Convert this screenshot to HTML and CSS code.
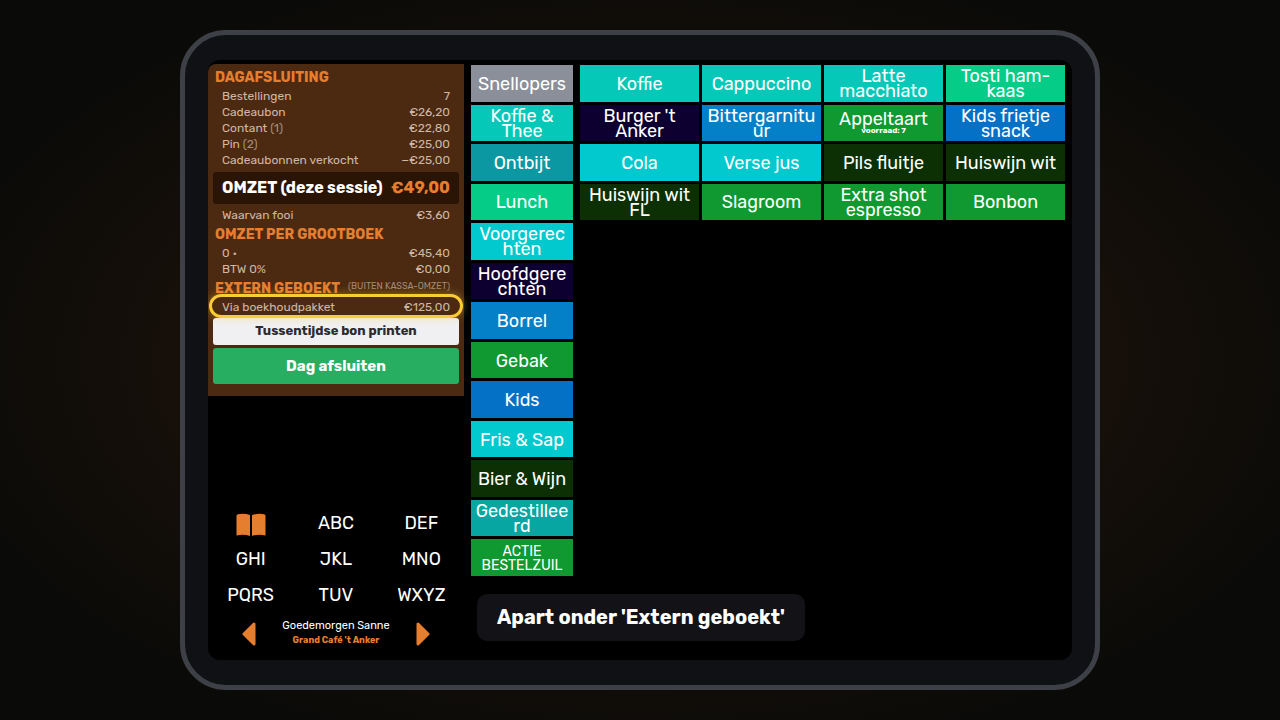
FILE: index.html
```html
<!DOCTYPE html>
<html lang="nl">
<head>
    <meta charset="UTF-8">
    <meta name="viewport" content="width=device-width, initial-scale=1.0">
    <title>Kassa - Dagafsluiting</title>
    <link rel="stylesheet" href="styles.css">
</head>
<body>
    <div class="device">
        <main class="screen">
            <div class="side">
                <section class="report">
                    <h2>Dagafsluiting</h2>
                    <table>
                        <tr><td>Bestellingen</td><td>7</td></tr>
                        <tr><td>Cadeaubon</td><td>€26,20</td></tr>
                        <tr><td>Contant <span class="count">(1)</span></td><td>€22,80</td></tr>
                        <tr><td>Pin <span class="count">(2)</span></td><td>€25,00</td></tr>
                        <tr><td>Cadeaubonnen verkocht</td><td>−€25,00</td></tr>
                    </table>
                    <div class="total">
                        <span>OMZET (deze sessie)</span>
                        <span class="amount">€49,00</span>
                    </div>
                    <table>
                        <tr><td>Waarvan fooi</td><td>€3,60</td></tr>
                    </table>
                    <h2>Omzet per grootboek</h2>
                    <table>
                        <tr><td>0 •</td><td>€45,40</td></tr>
                        <tr><td>BTW 0%</td><td>€0,00</td></tr>
                    </table>
                    <h2>Extern geboekt <small>(buiten kassa-omzet)</small></h2>
                    <div class="highlight">
                        <table>
                            <tr><td>Via boekhoudpakket</td><td>€125,00</td></tr>
                        </table>
                    </div>
                    <button type="button" class="print">Tussentijdse bon printen</button>
                    <button type="button" class="close-day">Dag afsluiten</button>
                </section>

                <section class="keypad">
                    <div class="keys">
                        <button type="button" aria-label="Menukaart">
                            <svg class="book" viewBox="0 0 30 24" width="30" height="24">
                                <path d="M0.500 3Q0.500 1.500 2 1.200Q8 0 14 2V23Q8 21 0.500 22.500Z"/>
                                <path d="M29.500 3Q29.500 1.500 28 1.200Q22 0 16 2V23Q22 21 29.500 22.500Z"/>
                            </svg>
                        </button>
                        <button type="button">ABC</button>
                        <button type="button">DEF</button>
                        <button type="button">GHI</button>
                        <button type="button">JKL</button>
                        <button type="button">MNO</button>
                        <button type="button">PQRS</button>
                        <button type="button">TUV</button>
                        <button type="button">WXYZ</button>
                    </div>
                    <div class="user-bar">
                        <button type="button" aria-label="Vorige">
                            <svg class="arrow" viewBox="0 0 14 24" width="14" height="24">
                                <path d="M12 2V22L2 12Z"/>
                            </svg>
                        </button>
                        <div class="user">
                            <p class="greeting">Goedemorgen Sanne</p>
                            <p class="place">Grand Café 't Anker</p>
                        </div>
                        <button type="button" aria-label="Volgende">
                            <svg class="arrow" viewBox="0 0 14 24" width="14" height="24">
                                <path d="M2 2V22L12 12Z"/>
                            </svg>
                        </button>
                    </div>
                </section>
            </div>

            <nav class="tiles categories">
                <button type="button" class="gray">Snellopers</button>
                <button type="button" class="turquoise">Koffie &amp; Thee</button>
                <button type="button" class="teal">Ontbijt</button>
                <button type="button" class="mint">Lunch</button>
                <button type="button" class="cyan">Voorgerec<br>hten</button>
                <button type="button" class="navy">Hoofdgere<br>chten</button>
                <button type="button" class="azure">Borrel</button>
                <button type="button" class="green">Gebak</button>
                <button type="button" class="blue">Kids</button>
                <button type="button" class="cyan">Fris &amp; Sap</button>
                <button type="button" class="forest">Bier &amp; Wijn</button>
                <button type="button" class="sea">Gedestillee<br>rd</button>
                <button type="button" class="green compact">ACTIE BESTELZUIL</button>
            </nav>

            <section class="tiles products">
                <button type="button" class="turquoise">Koffie</button>
                <button type="button" class="turquoise">Cappuccino</button>
                <button type="button" class="turquoise">Latte macchiato</button>
                <button type="button" class="mint">Tosti ham-kaas</button>
                <button type="button" class="navy">Burger 't Anker</button>
                <button type="button" class="azure">Bittergarnitu<br>ur</button>
                <button type="button" class="green">Appeltaart <span class="stock">voorraad: 7</span></button>
                <button type="button" class="blue">Kids frietje snack</button>
                <button type="button" class="cyan">Cola</button>
                <button type="button" class="cyan">Verse jus</button>
                <button type="button" class="forest">Pils fluitje</button>
                <button type="button" class="forest">Huiswijn wit</button>
                <button type="button" class="forest">Huiswijn wit FL</button>
                <button type="button" class="green">Slagroom</button>
                <button type="button" class="green">Extra shot espresso</button>
                <button type="button" class="green">Bonbon</button>
            </section>

            <div class="toast">Apart onder 'Extern geboekt'</div>
        </main>
    </div>
</body>
</html>
```

FILE: styles.css
```css
* {
    box-sizing: border-box;
}

body {
    margin: 0;
    padding: 30px 180px;
    min-height: 100vh;
    display: flex;
    background: radial-gradient(ellipse at center, #21150c 0%, #17100a 50%, #0a0a08 80%);
    font-family: Rubik, Roboto, sans-serif;
    color: #fff;
}

h2, p {
    margin: 0;
}

button {
    border: none;
    padding: 0;
    background: none;
    color: inherit;
    font: inherit;
    cursor: pointer;
}

.device {
    flex: 1;
    display: flex;
    padding: 25px 23px;
    border: 5px solid #3d4046;
    border-radius: 46px;
    background-color: #101114;
}

.screen {
    position: relative;
    flex: 1;
    display: grid;
    grid-template-columns: 256px 102fr 485fr;
    column-gap: 7px;
    padding: 4px 7px 0 0;
    border-radius: 12px;
    overflow: hidden;
    background-color: #000;
}

/* left column */
.side {
    display: flex;
    flex-direction: column;
    justify-content: space-between;
}

.report {
    display: flex;
    flex-direction: column;
    padding: 4px 5px 12px;
    border-top-left-radius: 8px;
    background-color: #4c2a12;
}

.report h2 {
    display: flex;
    justify-content: space-between;
    margin: 3px 0 1px;
    padding: 0 9px 0 2px;
    font-size: 14px;
    line-height: 18px;
    font-weight: 700;
    text-transform: uppercase;
    color: #e67e30;
}

.report h2:first-child {
    margin-top: 1px;
}

.report small {
    font-size: 9px;
    line-height: 12px;
    font-weight: 400;
    color: #a28a7a;
}

.report table {
    width: 100%;
    border-collapse: collapse;
    font-size: 12px;
    line-height: 16px;
    color: #cfb7a5;
}

.report td {
    padding: 0 9px;
}

.report td:last-child {
    text-align: right;
}

.count {
    color: #a68e7d;
}

.total {
    display: flex;
    justify-content: space-between;
    margin: 4px 0 3px;
    padding: 0 9px;
    border-radius: 3px;
    background-color: #2a1505;
    font-size: 16px;
    line-height: 32px;
    font-weight: 700;
    white-space: nowrap;
}

.total .amount {
    color: #e67e30;
}

.highlight {
    position: relative;
    margin-bottom: 3px;
}

.highlight::after {
    content: "";
    position: absolute;
    inset: -5px -4px -3px;
    border: 3px solid #fbcb35;
    border-radius: 12px;
    box-shadow: 0 0 8px rgba(251, 203, 53, 0.4);
}

.print {
    border-radius: 3px;
    background-color: #f0f0f2;
    font-size: 13px;
    line-height: 26px;
    padding-bottom: 1px;
    font-weight: 700;
    color: #2b2b30;
}

.close-day {
    margin-top: 3px;
    border-radius: 3px;
    background-color: #28ae61;
    font-size: 15px;
    line-height: 36px;
    font-weight: 700;
}

.keypad {
    padding-bottom: 14px;
}

.keys {
    display: grid;
    grid-template-columns: repeat(3, 1fr);
    grid-auto-rows: 36px;
    font-size: 18px;
}

.book {
    display: block;
    margin: 3px auto 0;
}

.book path, .arrow path {
    fill: #e67e30;
}

.user-bar {
    display: flex;
    justify-content: center;
    align-items: flex-end;
    gap: 26px;
    padding-top: 5px;
}

.user {
    width: 108px;
    white-space: nowrap;
    text-align: center;
}

.arrow {
    display: block;
}

.arrow path {
    stroke: #e67e30;
    stroke-width: 3;
    stroke-linejoin: round;
}

.greeting {
    font-size: 11px;
    line-height: 16px;
}

.place {
    font-size: 9px;
    line-height: 12px;
    font-weight: 700;
    color: #e67e30;
}

/* tiles */
.tiles {
    display: grid;
    grid-template-rows: repeat(13, 1fr);
    gap: 3px;
    padding: 1px 0 84px;
}

.products {
    grid-template-columns: repeat(4, 1fr);
}

.tiles button {
    min-width: 0;
    padding-top: 2px;
    font-size: 18px;
    line-height: 15px;
}

.tiles .compact {
    font-size: 14px;
    line-height: 14px;
}

.stock {
    display: block;
    font-size: 8px;
    line-height: 8px;
    font-weight: 700;
}

.gray { background-color: #8a8f99; }
.turquoise { background-color: #06c8b8; }
.teal { background-color: #0c98a2; }
.mint { background-color: #05cc86; }
.cyan { background-color: #02c9cd; }
.navy { background-color: #0d0030; }
.azure { background-color: #0380c8; }
.blue { background-color: #0571c6; }
.green { background-color: #0f9930; }
.forest { background-color: #0c3003; }
.sea { background-color: #08a6a2; }

.toast {
    position: absolute;
    left: 269px;
    bottom: 19px;
    padding: 0 20px;
    border-radius: 10px;
    background-color: #121217;
    font-size: 20px;
    line-height: 47px;
    font-weight: 700;
}
```
